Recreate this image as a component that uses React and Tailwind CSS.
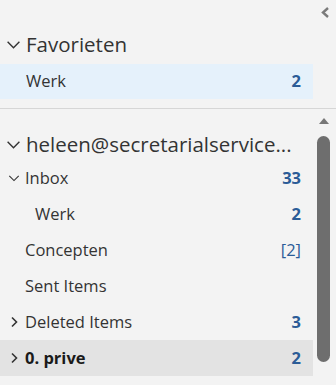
import { useState } from 'react';

function ChevronDown({ size = 14 }) {
    return (
        <svg width={size} height={size} viewBox="0 0 14 14" fill="none">
            <path d="M1.5 4.5 L7 10 L12.5 4.5" stroke="#333" strokeWidth="1.3" />
        </svg>
    );
}

function ChevronRight() {
    return (
        <svg width="10" height="12" viewBox="0 0 10 12" fill="none">
            <path d="M3 1.5 L7.5 6 L3 10.5" stroke="#333" strokeWidth="1.6" />
        </svg>
    );
}

const folders = [
    { name: "Inbox", count: "33", toggle: "down", indent: 0 },
    { name: "Werk", count: "2", indent: 1 },
    { name: "Concepten", count: "[2]", drafts: true, indent: 0 },
    { name: "Sent Items", count: "", indent: 0 },
    { name: "Deleted Items", count: "3", toggle: "right", indent: 0 },
    { name: "0. prive", count: "2", toggle: "right", indent: 0, bold: true, selected: true },
];

export default function App() {
    const [favOpen] = useState(true);

    return (
        <div
            className="w-[336px] h-[385px] bg-[#f3f3f3] overflow-hidden text-[#333]"
            style={{ fontFamily: '"Open Sans", "Noto Sans", sans-serif' }}
        >
            <div className="h-[24px] flex justify-end items-center pr-[6px]">
                <svg width="9" height="11" viewBox="0 0 9 11">
                    <path d="M7 1 L2 5.5 L7 10" stroke="#7a7a7a" strokeWidth="2.4" fill="none" />
                </svg>
            </div>

            <div className="h-[40px] flex items-center pl-[6px]">
                <ChevronDown size={15} />
                <span className="ml-[5px] text-[20.5px] leading-none">Favorieten</span>
            </div>

            {favOpen && (
                <div className="w-[313px] h-[35px] bg-[#e5f1fb] flex items-center justify-between pl-[26px] pr-[12px]">
                    <span className="text-[16.5px]">Werk</span>
                    <span className="text-[16.5px] font-bold text-[#2b5c97]">2</span>
                </div>
            )}

            <div className="mt-[9px] border-t border-[#d6d6d6] flex">
                <div className="w-[313px] pt-[19px]">
                    <div className="h-[32px] flex items-center pl-[6px]">
                        <ChevronDown size={15} />
                        <span className="ml-[5px] text-[20.5px] leading-none whitespace-nowrap">
                            heleen@secretarialservice...
                        </span>
                    </div>

                    {folders.map((f, i) => (
                        <div
                            key={i}
                            className={`h-[36px] flex items-center justify-between pr-[12px] ${f.selected ? "bg-[#e3e3e3]" : ""}`}
                        >
                            <div className="flex items-center">
                                <div className="w-[25px] flex justify-center pl-[3px]">
                                    {f.toggle === "down" && <ChevronDown size={12} />}
                                    {f.toggle === "right" && <ChevronRight />}
                                </div>
                                <span
                                    className={`text-[16.5px] ${f.indent ? "ml-[10px]" : ""} ${f.bold ? "font-bold text-[#1a1a1a]" : ""}`}
                                >
                                    {f.name}
                                </span>
                            </div>
                            <span
                                className={`text-[16.5px] text-[#2b5c97] ${f.drafts ? "" : "font-bold"}`}
                            >
                                {f.count}
                            </span>
                        </div>
                    ))}
                </div>

                <div className="flex-1 flex flex-col items-center pt-[8px] pr-[2px]">
                    <svg width="12" height="8" viewBox="0 0 12 8">
                        <path d="M6 1 L11 7 L1 7 Z" fill="#777" />
                    </svg>
                    <div className="mt-[11px] w-[13px] h-[226px] rounded-full bg-[#6e6e6e]" />
                </div>
            </div>
        </div>
    );
}
